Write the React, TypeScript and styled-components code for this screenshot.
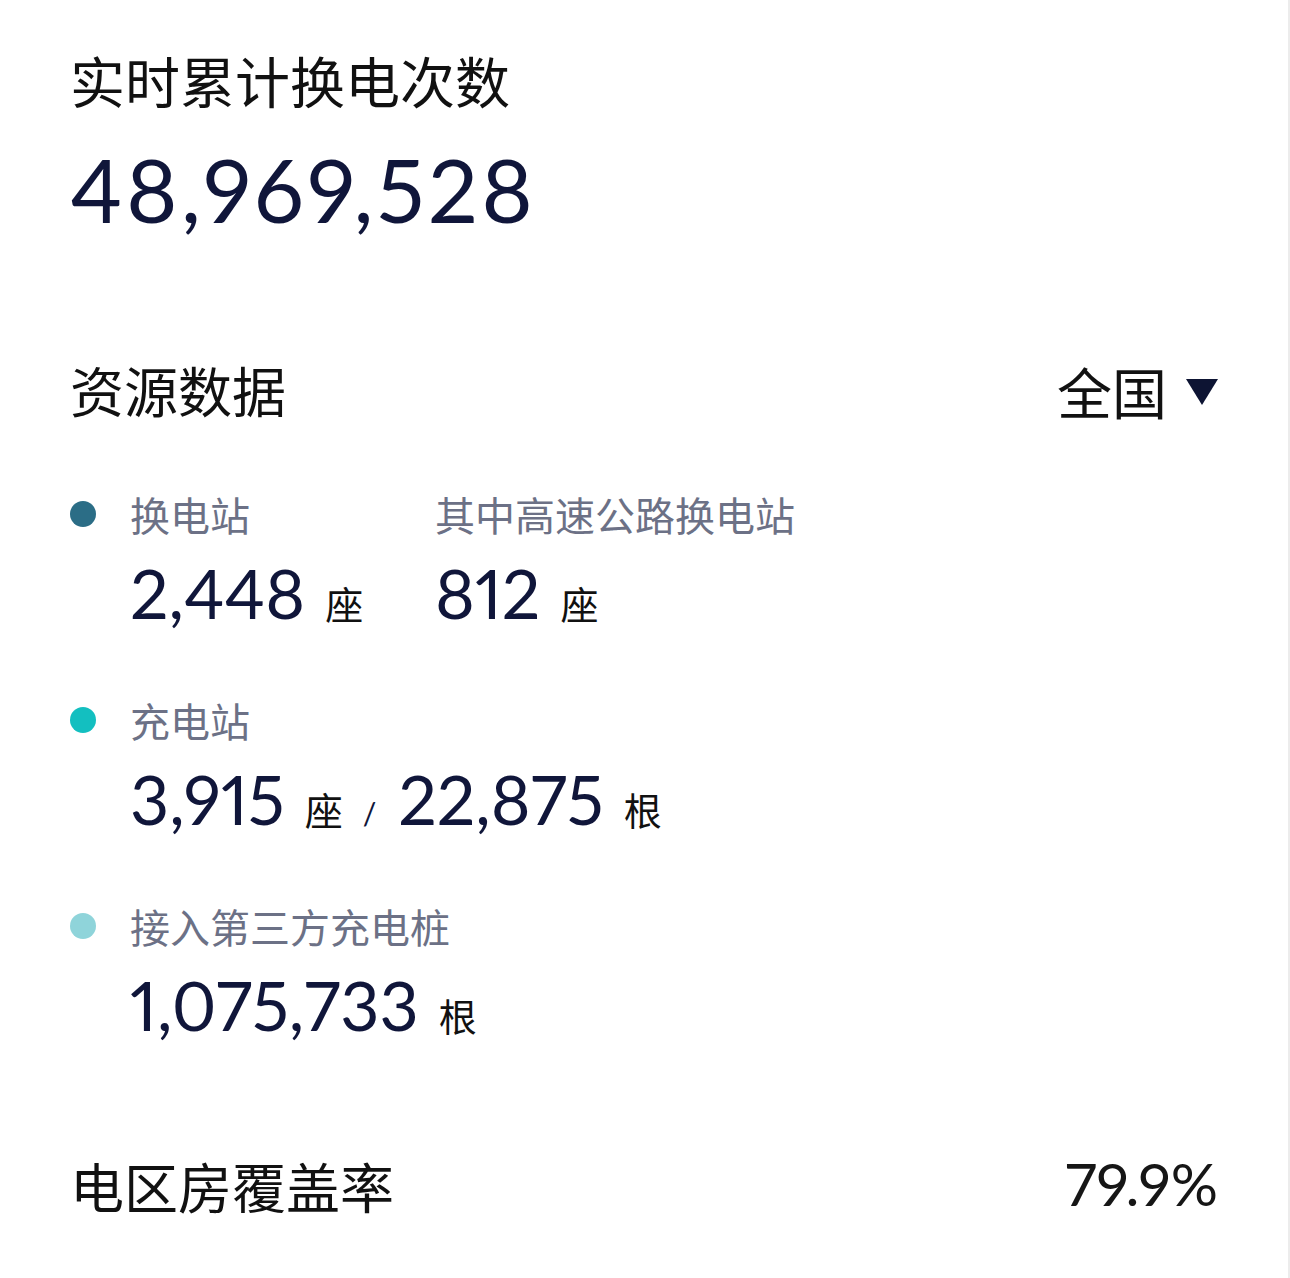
import React from "react";
import styled, { createGlobalStyle } from "styled-components";

const Global = createGlobalStyle`
  html, body { margin: 0; padding: 0; background: #ffffff; }
  body { font-family: "Noto Sans CJK SC", "Noto Sans", sans-serif; }
`;

const Page = styled.div`
  width: 1290px;
  height: 1278px;
  box-sizing: border-box;
  padding: 44px 70px 0 70px;
  border-right: 2px solid #ececec;
  overflow: hidden;
`;

const Title = styled.h1`
  margin: 0;
  font-family: "Noto Sans CJK SC", sans-serif;
  font-weight: 400;
  font-size: 55px;
  line-height: 70px;
  color: #111111;
`;

const BigNumber = styled.div`
  margin-top: 30px;
  font-family: Lato, "Noto Sans", sans-serif;
  font-variant-numeric: proportional-nums;
  font-size: 88px;
  line-height: 90px;
  letter-spacing: 3.4px;
  color: #10163a;
`;

const HeaderRow = styled.div`
  margin-top: 121px;
  display: flex;
  justify-content: space-between;
  align-items: center;
`;

const SectionTitle = styled.h2`
  margin: 0;
  font-family: "Noto Sans CJK SC", sans-serif;
  font-weight: 400;
  font-size: 54px;
  line-height: 70px;
  color: #111111;
`;

const RegionPicker = styled.div`
  display: flex;
  align-items: center;
  gap: 19px;
  font-family: "Noto Sans CJK SC", sans-serif;
  font-size: 55px;
  line-height: 70px;
  color: #111111;
`;

const Caret = styled.span`
  width: 0;
  height: 0;
  border-left: 16px solid transparent;
  border-right: 16px solid transparent;
  border-top: 26px solid #0d1433;
  margin-top: 4px;
`;

const List = styled.div`
  margin-top: 66px;
  display: flex;
  flex-direction: column;
  gap: 66px;
`;

const Item = styled.div`
  display: grid;
  grid-template-columns: 60px auto;
`;

const Dot = styled.span<{ $color: string }>`
  width: 26px;
  height: 26px;
  border-radius: 50%;
  background: ${(p) => p.$color};
  margin-top: 10px;
`;

const Columns = styled.div`
  display: flex;
`;

const Column = styled.div<{ $width?: number }>`
  width: ${(p) => (p.$width ? `${p.$width}px` : "auto")};
  display: flex;
  flex-direction: column;
`;

const Label = styled.div`
  font-family: "Noto Sans CJK SC", sans-serif;
  font-size: 40px;
  line-height: 46px;
  height: 46px;
  color: #6c7186;
`;

const Value = styled.div`
  margin-top: 18px;
  height: 76px;
  display: flex;
  align-items: baseline;
  font-family: Lato, "Noto Sans", sans-serif;
  font-variant-numeric: proportional-nums;
  font-size: 68px;
  line-height: 76px;
  color: #10163a;
`;

const Unit = styled.span`
  margin-left: 20px;
  font-family: "Noto Sans CJK SC", sans-serif;
  font-size: 38px;
  line-height: 76px;
  color: #111111;
`;

const Slash = styled.span`
  margin: 0 22px 0 20px;
  font-family: Lato, sans-serif;
  font-size: 30px;
  line-height: 76px;
  color: #10163a;
`;

const FooterRow = styled.div`
  margin-top: 108px;
  display: flex;
  justify-content: space-between;
  align-items: center;
`;

const Percent = styled.div`
  font-family: Lato, "Noto Sans", sans-serif;
  font-variant-numeric: proportional-nums;
  font-weight: 400;
  font-size: 59px;
  line-height: 70px;
  color: #161616;
  margin-top: -4px;
`;

export default function App() {
  return (
    <>
      <Global />
      <Page>
        <Title>实时累计换电次数</Title>
        <BigNumber>48,969,528</BigNumber>

        <HeaderRow>
          <SectionTitle>资源数据</SectionTitle>
          <RegionPicker>
            全国
            <Caret />
          </RegionPicker>
        </HeaderRow>

        <List>
          <Item>
            <Dot $color="#2b6d86" />
            <Columns>
              <Column $width={305}>
                <Label>换电站</Label>
                <Value>
                  2,448<Unit>座</Unit>
                </Value>
              </Column>
              <Column>
                <Label>其中高速公路换电站</Label>
                <Value>
                  812<Unit>座</Unit>
                </Value>
              </Column>
            </Columns>
          </Item>
          <Item>
            <Dot $color="#13bfc0" />
            <Column>
              <Label>充电站</Label>
              <Value>
                3,915<Unit>座</Unit>
                <Slash>/</Slash>22,875<Unit>根</Unit>
              </Value>
            </Column>
          </Item>
          <Item>
            <Dot $color="#8fd4da" />
            <Column>
              <Label>接入第三方充电桩</Label>
              <Value>
                1,075,733<Unit>根</Unit>
              </Value>
            </Column>
          </Item>
        </List>

        <FooterRow>
          <SectionTitle>电区房覆盖率</SectionTitle>
          <Percent>79.9%</Percent>
        </FooterRow>
      </Page>
    </>
  );
}
